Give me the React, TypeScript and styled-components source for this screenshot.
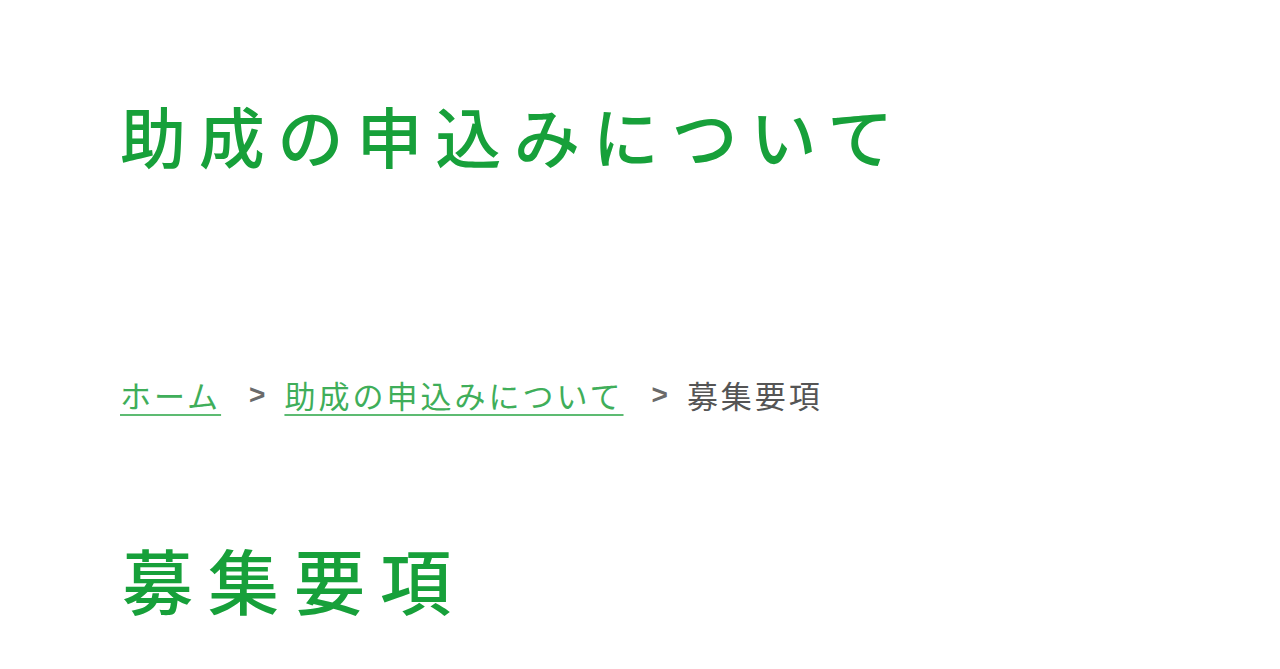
import React, { ReactElement } from 'react'
import styled, { createGlobalStyle } from 'styled-components'

const GlobalStyle = createGlobalStyle`
  html, body {
    margin: 0;
    padding: 0;
    background: #ffffff;
  }
  body {
    font-family: "Noto Sans CJK JP", "Noto Sans", sans-serif;
  }
`

const Page = styled.div`
  padding: 0 0 0 120px;
  display: flex;
  flex-direction: column;
`

const PageTitle = styled.h1`
  margin: 0;
  padding-top: 90px;
  font-size: 66px;
  line-height: 88px;
  font-weight: 500;
  letter-spacing: 12.8px;
  color: #17a03a;
`

const Breadcrumb = styled.nav`
  margin-top: 197px;
  display: flex;
  align-items: center;
  font-size: 31px;
  line-height: 40px;
  letter-spacing: 3px;
`

const CrumbLink = styled.a`
  color: #3fae5a;
  text-decoration: underline;
  text-decoration-color: #5dbb72;
  text-underline-offset: 6px;
  text-decoration-thickness: 2px;
`

const Separator = styled.span`
  color: #6a6a6a;
  margin: 0 16px 0 28px;
  font-family: "Liberation Sans", sans-serif;
  font-size: 28px;
  font-weight: 700;
`

const Current = styled.span`
  color: #555555;
`

const SectionTitle = styled.h2`
  margin: 0;
  margin-top: 119px;
  padding-left: 2px;
  font-size: 71px;
  line-height: 88px;
  font-weight: 500;
  letter-spacing: 15px;
  color: #17a03a;
`

function App(): ReactElement {
  return (
    <>
      <GlobalStyle />
      <Page>
        <PageTitle>助成の申込みについて</PageTitle>
        <Breadcrumb>
          <CrumbLink href="#">ホーム</CrumbLink>
          <Separator>&gt;</Separator>
          <CrumbLink href="#">助成の申込みについて</CrumbLink>
          <Separator>&gt;</Separator>
          <Current>募集要項</Current>
        </Breadcrumb>
        <SectionTitle>募集要項</SectionTitle>
      </Page>
    </>
  )
}

export default App
